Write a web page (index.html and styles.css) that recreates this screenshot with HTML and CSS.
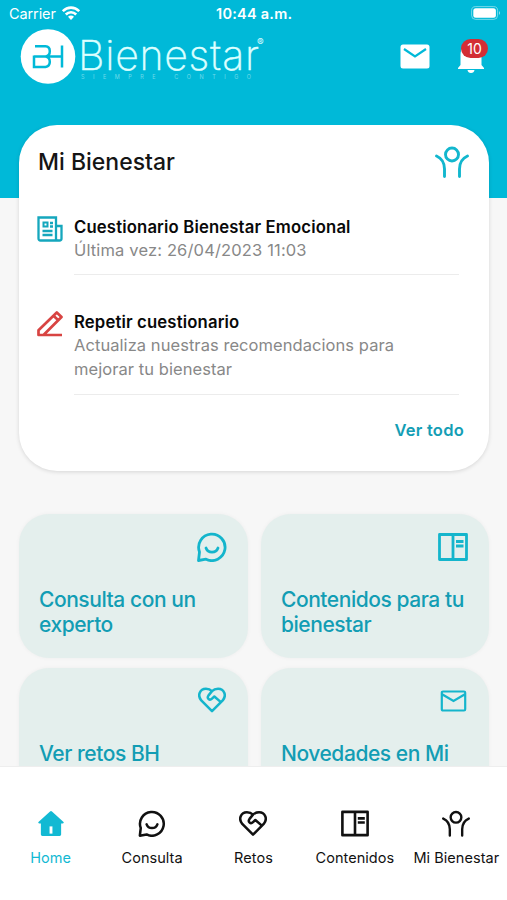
FILE: index.html
```html
<!DOCTYPE html>
<html lang="es">
<head>
<meta charset="utf-8">
<title>BH Bienestar</title>
<link rel="stylesheet" href="styles.css">
</head>
<body>
<svg class="defs" aria-hidden="true">
  <symbol id="person" viewBox="0 0 34 32"><g fill="none" stroke="currentColor" stroke-width="2.9" stroke-linecap="round"><circle cx="17" cy="8.500" r="6.5"/><path d="M1.500 10C7 12.500 9.500 17 9.500 23V30.500M32.500 10C27 12.500 24.500 17 24.500 23V30.500"/></g></symbol>
  <symbol id="chat" viewBox="0 0 30 30"><g fill="none" stroke="currentColor" stroke-width="2.800" stroke-linecap="round" stroke-linejoin="round"><path d="M1.500 28.500 2.500 20A13.200 13.200 0 1 1 9 27.200Z"/><path d="M9 16C11 21.500 19 21.500 21 16"/></g></symbol>
  <symbol id="book" viewBox="0 0 30 28"><path fill="none" stroke="currentColor" stroke-width="2.800" stroke-linejoin="round" d="M1.500 1.500H28.500V26.500H1.500ZM15 1.500V26.500M18 8.500H25.500M18 13H25.500"/></symbol>
  <symbol id="heart" viewBox="0 0 30 27"><path fill="none" stroke="currentColor" stroke-width="2.700" stroke-linecap="round" stroke-linejoin="round" d="M15 25.500 3.500 14C-1 8.500 2 1.500 8.500 1.500C11.500 1.500 13.500 2.500 15 4C16.500 2.500 18.500 1.500 21.500 1.500C28 1.500 31 8.500 26.500 14ZM15 4 11.300 8.500C9 12 12.500 14.500 15 12L17.500 9.800 24.500 15.800"/></symbol>
</svg>
<div class="app">
  <header class="header">
    <div class="status">
      <span class="carrier">Carrier</span>
      <svg class="wifi" viewBox="0 0 18 14"><g fill="none" stroke="#fff" stroke-width="2.600"><path d="M.8 5.200C5.500.400 12.500.400 17.200 5.200"/><path d="M3.800 8.500C6.800 5.500 11.200 5.500 14.200 8.500"/></g><path fill="#fff" d="M6 10.800C7.800 9.200 10.200 9.200 12 10.800L9 14Z"/></svg>
      <span class="clock">10:44 a.m.</span>
      <svg class="battery" viewBox="0 0 31 14"><rect x=".6" y=".6" width="26" height="12.800" rx="4" fill="none" stroke="#fff" stroke-opacity=".45"/><rect x="2.300" y="2.300" width="22.600" height="9.400" rx="2.500" fill="#fff"/><path d="M28 5v4q2-2 0-4" fill="#fff" opacity=".6"/></svg>
    </div>
    <div class="brandbar">
      <svg class="logo" viewBox="0 0 250 56" role="img" aria-label="BH Bienestar">
        <circle cx="28" cy="27.500" r="27.300" fill="#fff"/>
        <path d="M15 17.300H25.500Q29.800 17.500 29.800 22.300Q29.800 27.200 25.500 27.500H42M14 26.500V38H25.500Q29.800 37.500 29.800 32.800Q29.800 28 25.500 27.500H14M42 16.500V38.500" fill="none" stroke="#00b9d8" stroke-width="2.500"/>
        <text class="wordmark" x="58" y="41.300" textLength="181">Bienestar</text>
        <text class="registered" x="237" y="16.500">®</text>
        <text class="tagline" x="61" y="49.500" textLength="170">SIEMPRE CONTIGO</text>
      </svg>
      <div class="actions">
        <svg class="mail" viewBox="0 0 30 25"><rect x=".5" y=".5" width="29" height="24" rx="2.500" fill="#fff"/><path d="M4 5 15 12.500 26 5" fill="none" stroke="#00b9d8" stroke-width="2.200"/></svg>
        <div class="bell">
          <svg viewBox="0 0 28 30"><path fill="#fff" d="M3.500 22V12C3.500 5 8 1 14 1S24.500 5 24.500 12V22L27 25V26H1V25ZM10.500 27H17.500Q17 30 14 30T10.500 27Z"/></svg>
          <span class="badge">10</span>
        </div>
      </div>
    </div>
  </header>
  <main class="content">
    <section class="card">
      <div class="card-head"><h1>Mi Bienestar</h1><svg class="person"><use href="#person"/></svg></div>
      <article class="item first">
        <svg class="item-icon news" viewBox="0 0 26 26"><path d="M1.500 1.500H19V24.500H3.500Q1.500 24.500 1.500 22.500ZM19 10H24.500V22.500Q24.500 24.500 22.500 24.500H21Q19 24.500 19 22.500M5.500 15H15.500M5.500 19H15.500M13 7H16M13 10.500H16" fill="none" stroke="currentColor" stroke-width="2.300"/><path d="M6.500 6.500H10.500V10.500H6.500Z" fill="none" stroke="currentColor" stroke-width="2"/></svg>
        <div class="item-body"><h2>Cuestionario Bienestar Emocional</h2><p class="date">Última vez: 26/04/2023 11:03</p></div>
      </article>
      <article class="item second">
        <svg class="item-icon pen" viewBox="0 0 26 26"><path d="M25 24H1.500V19.300L19.800 1.500 24.500 6 6.500 24M16.500 4.700 21.300 9.300" fill="none" stroke="currentColor" stroke-width="2.700" stroke-linejoin="round"/></svg>
        <div class="item-body"><h2>Repetir cuestionario</h2><p>Actualiza nuestras recomendacions para<br>mejorar tu bienestar</p></div>
      </article>
      <a class="more">Ver todo</a>
    </section>
    <section class="tiles">
      <div class="tile"><svg class="chat"><use href="#chat"/></svg><h3>Consulta con un<br>experto</h3></div>
      <div class="tile"><svg class="book"><use href="#book"/></svg><h3>Contenidos para tu<br>bienestar</h3></div>
      <div class="tile"><svg class="heart"><use href="#heart"/></svg><h3>Ver retos BH</h3></div>
      <div class="tile"><svg class="envelope" viewBox="0 0 26 22"><path d="M2.500 1.500H23.500Q24.700 1.500 24.700 2.700V19.300Q24.700 20.500 23.500 20.500H2.500Q1.300 20.500 1.300 19.300V2.700Q1.300 1.500 2.500 1.500M2 4.500 13 11 24 4.500" fill="none" stroke="currentColor" stroke-width="2.200"/></svg><h3>Novedades en Mi</h3></div>
    </section>
  </main>
  <nav class="tabs">
    <a class="tab active"><svg viewBox="0 0 28 28"><path d="M13 1.500Q14 .5 15 1.500L27 12.500Q28 14 26 14H24.500V25.500Q24.500 27 23 27H5Q3.500 27 3.500 25.500V14H2Q0 14 1 12.500Z" fill="currentColor"/><path d="M12.500 17H15.500V24.500H12.500Z" fill="#fff"/></svg><span>Home</span></a>
    <a class="tab"><svg><use href="#chat"/></svg><span>Consulta</span></a>
    <a class="tab"><svg><use href="#heart"/></svg><span>Retos</span></a>
    <a class="tab"><svg><use href="#book"/></svg><span>Contenidos</span></a>
    <a class="tab"><svg><use href="#person"/></svg><span>Mi Bienestar</span></a>
  </nav>
</div>
</body>
</html>
```
FILE: styles.css
```css
* { box-sizing: border-box; }
body { margin: 0; font-family: Inter, "Liberation Sans", sans-serif; }
h1, h2, h3, p { margin: 0; font-weight: inherit; }
svg { display: block; flex: none; }
span, h2, h3 { white-space: nowrap; }
.defs { width: 0; height: 0; position: absolute; }
.app { width: 507px; height: 900px; display: flex; flex-direction: column; overflow: hidden; background: #f7f7f7; }
.header { height: 198px; flex: none; background: #00b9d8; color: #fff; }
.status { height: 28px; display: grid; grid-template-columns: 53px 154px 1fr 36px; align-items: center; padding-left: 9px; }
.carrier { font-size: 14.5px; letter-spacing: -.1px; margin-top: -2px; }
.wifi { width: 18px; height: 14px; margin-top: -2px; }
.clock { font-size: 14.5px; font-weight: 600; letter-spacing: .25px; margin-top: -1px; }
.battery { width: 31px; height: 14px; margin-top: -2px; }
.brandbar { height: 60px; display: flex; justify-content: space-between; padding: 1px 22px 0 20px; }
.logo { width: 250px; height: 56px; }
.wordmark { font: 200 41px Inter, sans-serif; fill: #dcffff; stroke: #dcffff; stroke-width: .4px; }
.registered { font: 500 10px Inter, sans-serif; fill: #d5faff; }
.tagline { font: 400 5.5px Inter, sans-serif; fill: #71d9e9; }
.actions { display: flex; gap: 28px; padding-top: 10px; }
.mail { width: 30px; height: 25px; margin-top: 5px; margin-right: -1px; margin-left: 1px; }
.bell { position: relative; width: 28px; height: 34px; }
.bell svg { width: 28px; height: 30px; margin-top: 4px; }
.badge { position: absolute; left: 4px; top: 0; width: 27px; height: 19px; border-radius: 10px; background: #d32e35; font-size: 14px; line-height: 19px; text-align: center; }
.content { margin-top: -73px; padding: 0 18px 0 19px; flex: 1; min-height: 0; overflow: hidden; }
.card { height: 346px; border-radius: 38px; background: #fff; box-shadow: 0 1px 4px #0002; padding: 21px 19px 0; }
.card-head { display: flex; justify-content: space-between; height: 69px; }
h1 { font-size: 23px; line-height: 33px; font-weight: 550; letter-spacing: 0; color: #151515; }
.person { width: 34px; height: 32px; color: #12b7ce; margin-right: 1px; }
.item { display: flex; gap: 10px; }
.item-icon { width: 26px; height: 26px; margin-left: -1px; margin-right: 1px; }
.news { color: #15a7bd; margin-top: 1px; }
.pen { color: #d84442; margin-top: 1px; }
.item-body { width: 385px; border-bottom: 1px solid #ececec; }
.first { height: 60px; }
.second { height: 85px; margin-top: 35px; }
.item h2 { font-size: 16.7px; line-height: 24px; font-weight: 600; letter-spacing: .15px; color: #090909; }
.item p { font-size: 16.5px; line-height: 24px; letter-spacing: .06px; color: #888; margin-top: -1px; }
.item .date { letter-spacing: .15px; }
.more { display: block; margin: 23px 6px 0 0; text-align: right; font-size: 16.5px; line-height: 24px; font-weight: 600; letter-spacing: .25px; color: #149eb5; }
.tiles { margin-top: 43px; display: grid; grid-template-columns: 229px 228px; grid-auto-rows: 144px; gap: 10px 13px; }
.tile { border-radius: 30px; background: #e4efed; box-shadow: 0 0 4px #0000000b; padding: 18px 20px; color: #14b5cc; display: flex; flex-direction: column; align-items: flex-end; }
.tile h3 { width: 100%; margin-top: auto; height: 53px; font-size: 21px; line-height: 25px; font-weight: 550; letter-spacing: -.45px; color: #129db4; }
.chat { width: 30px; height: 30px; margin-right: 1px; }
.book { width: 30px; height: 28px; margin-top: 1px; margin-right: 1px; }
.heart { width: 28px; height: 26px; margin: 1px 2px 0 0; }
.envelope { width: 27px; height: 22px; margin: 4px 2px 0 0; }
.tabs { height: 134px; flex: none; background: #fff; border-top: 1px solid #eee; display: grid; grid-template-columns: repeat(5, 1fr); padding-top: 43px; }
.tab { display: flex; flex-direction: column; align-items: center; gap: 10px; color: #111; font-size: 14.5px; line-height: 20px; letter-spacing: .05px; }
.tab svg { width: 28px; height: 27px; }
.tab span { margin-top: 1px; }
.active { color: #12b9d3; }
```
